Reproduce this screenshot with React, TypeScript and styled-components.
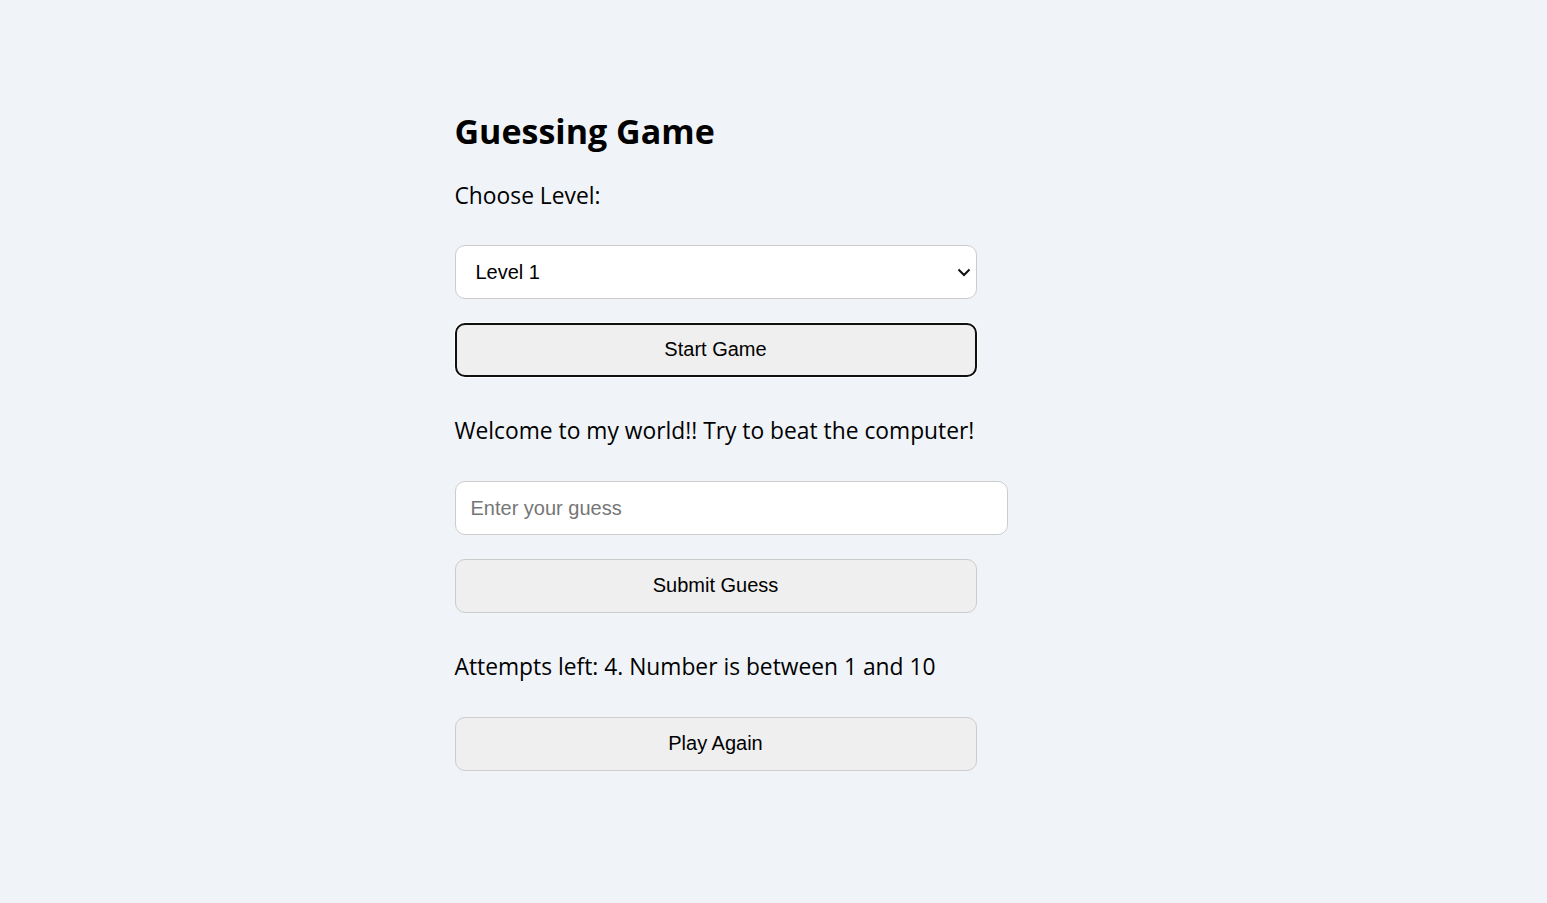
import React from "react";
import styled, { createGlobalStyle } from "styled-components";

const Global = createGlobalStyle`
  html, body { margin: 0; padding: 0; background: #f0f4f8; }
  body { font-family: "Open Sans", "Noto Sans", sans-serif; color: #000; }
`;

const Page = styled.div`
  min-height: 903px;
  display: flex;
  justify-content: center;
`;

const Container = styled.div`
  width: 638px;
  padding-top: 105px;
  display: flex;
  flex-direction: column;
  align-items: flex-start;
`;

const Title = styled.h1`
  margin: 0;
  font-size: 34px;
  line-height: 52px;
  font-weight: 700;
`;

const Text = styled.p<{ $top: number; $bottom: number }>`
  margin: ${(p) => p.$top}px 0 ${(p) => p.$bottom}px;
  font-size: 22.8px;
  line-height: 30px;
`;

const SelectWrap = styled.div`
  position: relative;
  width: 522px;
  height: 54px;
`;

const Select = styled.select`
  width: 100%;
  height: 100%;
  box-sizing: border-box;
  padding: 0 40px 0 20px;
  appearance: none;
  -webkit-appearance: none;
  font-family: "Liberation Sans", Arial, sans-serif;
  font-size: 20px;
  background: #fff;
  border: 1px solid #ccc;
  border-radius: 10px;
  color: #000;
`;

const Chevron = styled.svg`
  position: absolute;
  right: 6px;
  top: 23px;
  width: 14px;
  height: 9px;
  pointer-events: none;
`;

const Input = styled.input`
  width: 553px;
  height: 54px;
  box-sizing: border-box;
  padding: 0 15px;
  font-family: "Liberation Sans", Arial, sans-serif;
  font-size: 20px;
  background: #fff;
  border: 1px solid #ccc;
  border-radius: 10px;
  &::placeholder { color: #767676; }
`;

const Button = styled.button<{ $focused?: boolean; $gap?: number }>`
  width: 522px;
  height: 54px;
  box-sizing: border-box;
  margin-top: ${(p) => (p.$gap ?? 24)}px;
  padding-bottom: 2px;
  font-family: "Liberation Sans", Arial, sans-serif;
  font-size: 20px;
  color: #000;
  background: #efefef;
  border: ${(p) => (p.$focused ? "2px solid #101010" : "1px solid #ccc")};
  box-shadow: ${(p) => (p.$focused ? "0 0 0 1px #fff" : "none")};
  border-radius: 10px;
  cursor: pointer;
`;

export default function App() {
  return (
    <Page>
      <Global />
      <Container>
        <Title>Guessing Game</Title>
        <Text $top={24} $bottom={34}>Choose Level:</Text>
        <SelectWrap>
          <Select defaultValue="1">
            <option value="1">Level 1</option>
            <option value="2">Level 2</option>
            <option value="3">Level 3</option>
          </Select>
          <Chevron viewBox="0 0 14 9">
            <path d="M1.5 1.5 L7 7 L12.5 1.5" fill="none" stroke="#111" strokeWidth="2" />
          </Chevron>
        </SelectWrap>
        <Button $focused>Start Game</Button>
        <Text $top={39} $bottom={35}>Welcome to my world!! Try to beat the computer!</Text>
        <Input placeholder="Enter your guess" />
        <Button>Submit Guess</Button>
        <Text $top={39} $bottom={35}>Attempts left: 4. Number is between 1 and 10</Text>
        <Button $gap={0}>Play Again</Button>
      </Container>
    </Page>
  );
}
